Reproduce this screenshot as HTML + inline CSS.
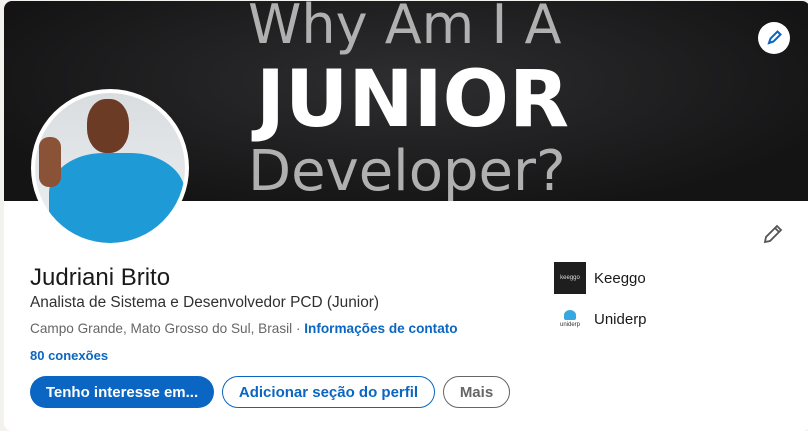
<!DOCTYPE html>
<html><head><meta charset="utf-8"><style>
*{margin:0;padding:0;box-sizing:border-box}
body{width:808px;height:425px;background:#f3f2ef;font-family:"Liberation Sans",sans-serif;position:relative;overflow:hidden}
.card{position:absolute;left:4px;top:1px;width:806px;height:430px;background:#fff;border-radius:8px;overflow:hidden}
.banner{position:absolute;left:0;top:0;width:806px;height:200px;background:radial-gradient(ellipse at 50% 40%,#2e2e30,#141415 80%);overflow:hidden}
.t{position:absolute;font-family:"DejaVu Sans",sans-serif;color:#b0b0b0;white-space:nowrap}
.t1{left:244px;top:-8px;font-size:54px;letter-spacing:0px}
.t2{left:252px;top:54px;font-size:78px;font-weight:bold;color:#fff}
.t3{left:244px;top:138px;font-size:56px}
.pen{position:absolute;left:754px;top:21px;width:32px;height:32px;border-radius:50%;background:#fff}
.avatar{position:absolute;left:27px;top:88px;width:158px;height:158px;border-radius:50%;background:#fff;padding:4px}
.avin{width:100%;height:100%;border-radius:50%;overflow:hidden;position:relative;background:linear-gradient(#d9dde0,#eef0f1)}
.name{position:absolute;left:26px;top:263px;font-size:24px;color:#191919}
.head{position:absolute;left:26px;top:293px;font-size:15.4px;color:#303030}
.loc{position:absolute;left:26px;top:320px;font-size:13.6px;color:#666}
.loc b{color:#0a66c2}
.conn{position:absolute;left:26px;top:347px;font-size:13px;color:#0a66c2;font-weight:bold}
.btn{position:absolute;top:375px;height:32px;border-radius:16px;font-size:15px;font-weight:bold;display:flex;align-items:center;justify-content:center}
.b1{left:26px;width:184px;background:#0a66c2;color:#fff}
.b2{left:218px;width:213px;border:1.5px solid #0a66c2;color:#0a66c2}
.b3{left:439px;width:67px;border:1.5px solid #666;color:#666;font-weight:bold}
.co{position:absolute;left:550px;font-size:15px;color:#191919;display:flex;align-items:center}
.logo{width:32px;height:32px;margin-right:8px;display:flex;align-items:center;justify-content:center;font-size:6px}
</style></head><body>
<div class="card">
 <div class="banner">
  <div class="t t1">Why Am I A</div>
  <div class="t t2">JUNIOR</div>
  <div class="t t3">Developer?</div>
  <div class="pen"><svg width="32" height="32" viewBox="0 0 32 32"><path d="M11 21l1.5-4.5 7-7 3 3-7 7z" fill="none" stroke="#0a66c2" stroke-width="2"/></svg></div>
 </div>
 <div class="avatar"><div class="avin">
  <div style="position:absolute;left:52px;top:6px;width:42px;height:54px;border-radius:45%;background:#6b3b25"></div>
  <div style="position:absolute;left:14px;top:60px;width:136px;height:100px;border-radius:40% 40% 0 0;background:#1e9ad6"></div>
  <div style="position:absolute;left:4px;top:44px;width:22px;height:50px;border-radius:10px;background:#8a5236"></div>
 </div></div>
 <svg style="position:absolute;left:758px;top:222px" width="22" height="22" viewBox="0 0 22 22"><path d="M3 19l1-5L15 3l4 4L8 18z M13 5l4 4" fill="none" stroke="#555" stroke-width="1.8"/></svg>
 <div class="name">Judriani Brito</div>
 <div class="head">Analista de Sistema e Desenvolvedor PCD (Junior)</div>
 <div class="loc">Campo Grande, Mato Grosso do Sul, Brasil · <b>Informações de contato</b></div>
 <div class="conn">80 conexões</div>
 <div class="btn b1">Tenho interesse em...</div>
 <div class="btn b2">Adicionar seção do perfil</div>
 <div class="btn b3">Mais</div>
 <div class="co" style="top:261px"><div class="logo" style="background:#1e1e1e;color:#ddd">keeggo</div>Keeggo</div>
 <div class="co" style="top:302px"><div class="logo" style="flex-direction:column;color:#333"><span style="width:12px;height:10px;background:#3aa8e0;border-radius:50% 50% 2px 2px;display:block;margin-bottom:2px"></span>uniderp</div>Uniderp</div>
</div>
</body></html>
